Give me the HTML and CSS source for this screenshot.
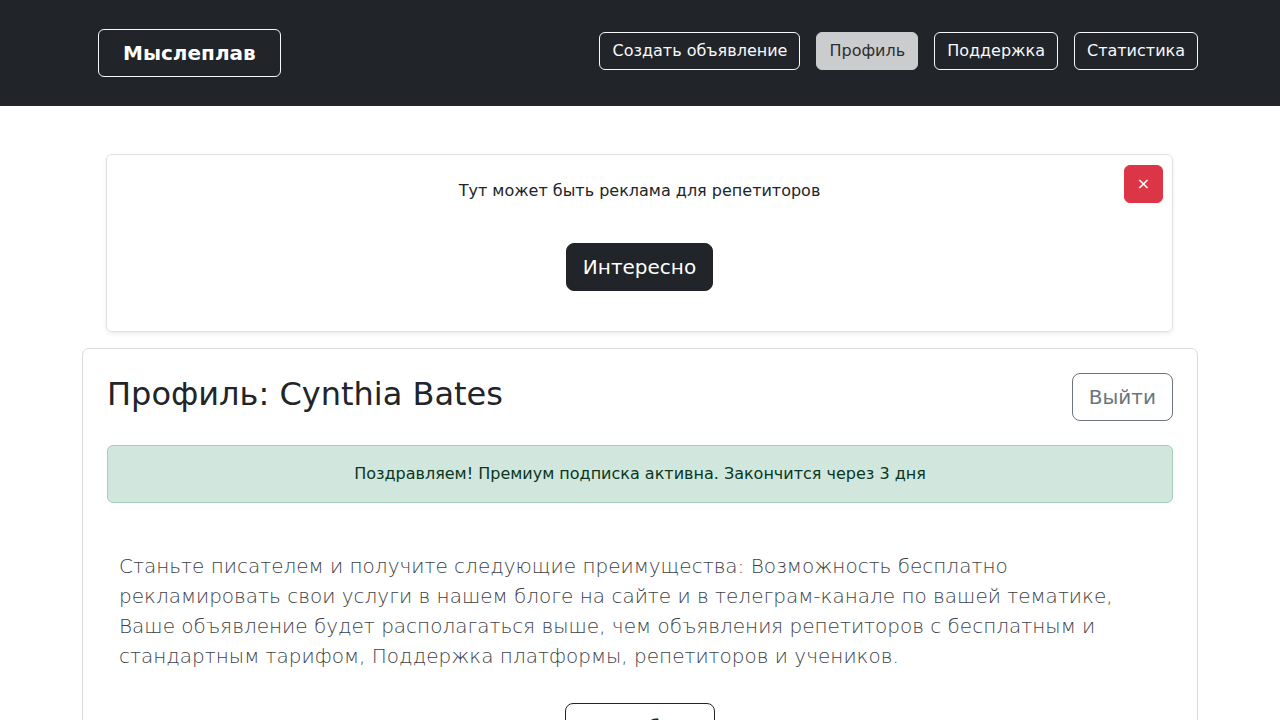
FILE: index.html
```html
<!DOCTYPE html>
<html lang="ru">
<head>
<meta charset="utf-8">
<title>Мыслеплав — Профиль</title>
<link rel="stylesheet" href="styles.css">
</head>
<body>
<header class="navbar">
  <div class="nav-inner">
    <a class="brand" href="#">Мыслеплав</a>
    <nav class="nav-links">
      <a class="nav-btn" href="#">Создать объявление</a>
      <a class="nav-btn active" href="#">Профиль</a>
      <a class="nav-btn" href="#">Поддержка</a>
      <a class="nav-btn" href="#">Статистика</a>
    </nav>
  </div>
</header>
<main class="container">
  <section class="ad-card">
    <button class="close-btn" type="button">×</button>
    <p class="ad-text">Тут может быть реклама для репетиторов</p>
    <button class="btn-dark-lg" type="button">Интересно</button>
  </section>
  <section class="profile-card">
    <div class="profile-head">
      <h2 class="profile-title">Профиль: Cynthia Bates</h2>
      <button class="btn-logout" type="button">Выйти</button>
    </div>
    <div class="alert-success">Поздравляем! Премиум подписка активна. Закончится через 3 дня</div>
    <p class="lead-text">Станьте писателем и получите следующие преимущества: Возможность бесплатно рекламировать свои услуги в нашем блоге на сайте и в телеграм-канале по вашей тематике, Ваше объявление будет располагаться выше, чем объявления репетиторов с бесплатным и стандартным тарифом, Поддержка платформы, репетиторов и учеников.</p>
    <div class="center-row">
      <button class="btn-outline-lg" type="button">Подробнее</button>
    </div>
  </section>
</main>
</body>
</html>
```
FILE: styles.css
```css
* { box-sizing: border-box; }
html, body { margin: 0; padding: 0; }
body {
  font-family: "DejaVu Sans", "Noto Sans", sans-serif;
  font-size: 16px;
  line-height: 1.5;
  color: #212529;
  background: #fff;
}
.navbar {
  background: #212529;
  height: 106px;
}
.nav-inner {
  width: 1116px;
  margin: 0 auto;
  height: 100%;
  padding-left: 16px;
  display: flex;
  align-items: center;
  justify-content: space-between;
}
.brand {
  display: inline-block;
  color: #fff;
  font-weight: bold;
  font-size: 20px;
  line-height: 30px;
  padding: 8px 24px;
  border: 1px solid #f8f9fa;
  border-radius: 6px;
  text-decoration: none;
}
.nav-links {
  display: flex;
  gap: 16px;
  margin-bottom: 4px;
}
.nav-btn {
  display: inline-block;
  color: #f8f9fa;
  border: 1px solid #f8f9fa;
  border-radius: 6px;
  padding: 6px 12px;
  line-height: 24px;
  text-decoration: none;
  font-size: 16px;
}
.nav-btn.active {
  background: #cbcccd;
  border-color: #cbcccd;
  color: #2b2f33;
}
.container {
  width: 1116px;
  margin: 0 auto;
}
.ad-card {
  position: relative;
  margin: 48px 25px 16px 24px;
  border: 1px solid #dee2e6;
  border-radius: 6px;
  box-shadow: 0 2px 4px rgba(0,0,0,0.075);
  padding: 24px 16px 40px;
  text-align: center;
}
.ad-text {
  margin: 0;
  line-height: 24px;
}
.close-btn {
  position: absolute;
  top: 10px;
  right: 9px;
  width: 39px;
  height: 38px;
  background: #dc3545;
  color: #fff;
  border: 1px solid #dc3545;
  border-radius: 6px;
  font-family: inherit;
  font-size: 16px;
  line-height: 24px;
  padding: 0;
}
.btn-dark-lg {
  margin-top: 40px;
  background: #212529;
  color: #fff;
  border: 1px solid #212529;
  border-radius: 8px;
  font-family: inherit;
  font-size: 20px;
  line-height: 30px;
  padding: 8px 16px;
}
.profile-card {
  border: 1px solid #dcdcdc;
  border-radius: 7px;
  padding: 24px 24px 0;
}
.profile-head {
  display: flex;
  justify-content: space-between;
  align-items: flex-start;
}
.profile-title {
  margin: 2px 0 0;
  font-size: 32px;
  font-weight: 500;
  line-height: 1.2;
  color: #212529;
}
.btn-logout {
  background: #fff;
  color: #6c757d;
  border: 1px solid #6c757d;
  border-radius: 8px;
  font-family: inherit;
  font-size: 20px;
  line-height: 30px;
  padding: 8px 16px;
}
.alert-success {
  margin-top: 24px;
  background: #d1e7dd;
  border: 1px solid #a3cfbb;
  color: #0a3622;
  border-radius: 6px;
  padding: 16px;
  text-align: center;
  line-height: 24px;
}
.lead-text {
  margin: 48px 12px 0;
  font-size: 20px;
  font-weight: 300;
  line-height: 30px;
  color: #3d4247;
}
.center-row {
  display: flex;
  justify-content: center;
  margin-top: 32px;
  padding-bottom: 24px;
}
.btn-outline-lg {
  background: #fff;
  color: #212529;
  border: 1px solid #212529;
  border-radius: 8px;
  font-family: inherit;
  font-size: 20px;
  line-height: 30px;
  padding: 8px 16px;
}
```
